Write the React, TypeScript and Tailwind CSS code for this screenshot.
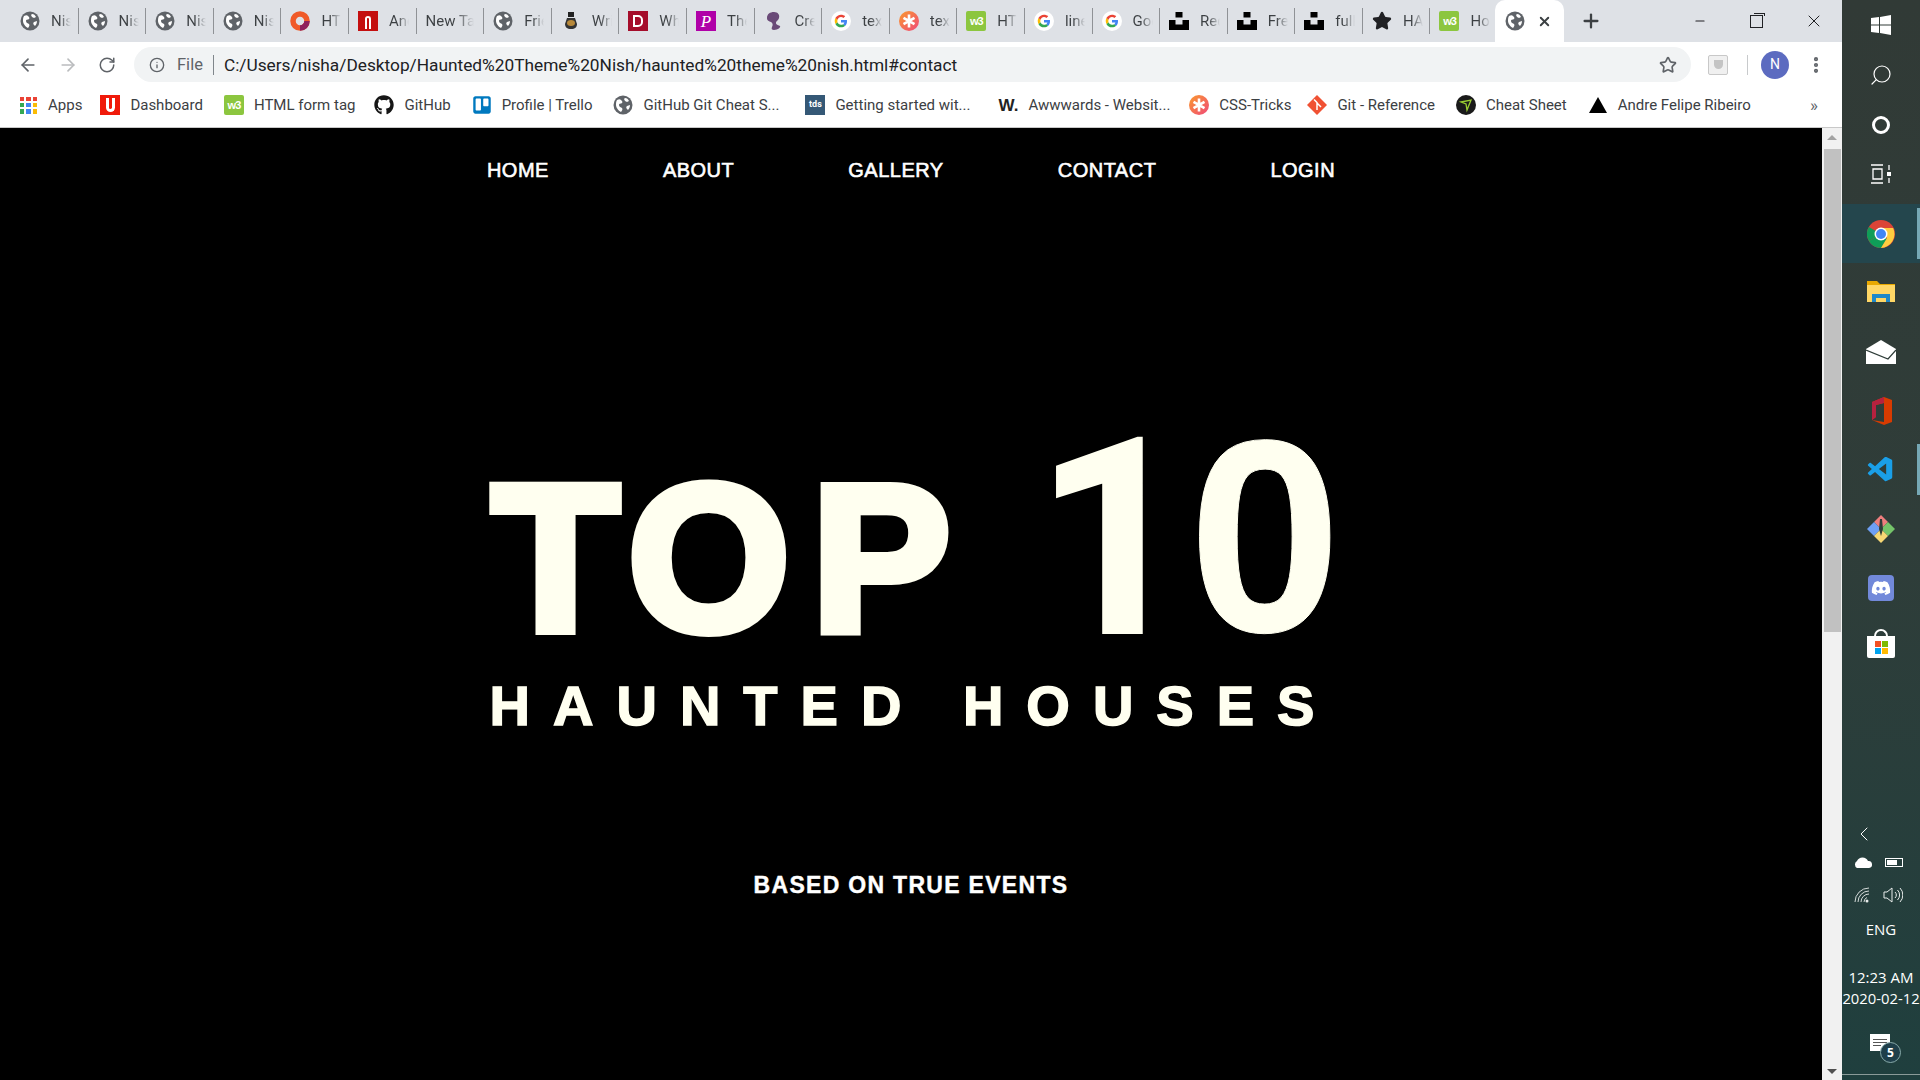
import { ArrowLeft, ArrowRight, ChevronLeft, Info, Minus, MoreVertical, Plus, RotateCw, Search, Star, X } from "lucide-react";
import { FaDiscord, FaGithub, FaTrello } from "react-icons/fa";
import { VscVscode } from "react-icons/vsc";

type Fav = "globe" | "opera" | "red" | "none" | "ink" | "dictionary" | "p" | "blob" | "google" | "css" | "w3" | "unsplash" | "star";

const tabs: { icon: Fav; label: string }[] = [
  { icon: "globe", label: "Nisha" },
  { icon: "globe", label: "Nisha" },
  { icon: "globe", label: "Nisha" },
  { icon: "globe", label: "Nisha" },
  { icon: "opera", label: "HTML" },
  { icon: "red", label: "Ancient" },
  { icon: "none", label: "New Tab" },
  { icon: "globe", label: "Friends" },
  { icon: "ink", label: "Writer" },
  { icon: "dictionary", label: "What" },
  { icon: "p", label: "The" },
  { icon: "blob", label: "Create" },
  { icon: "google", label: "text" },
  { icon: "css", label: "text" },
  { icon: "w3", label: "HTML" },
  { icon: "google", label: "linear" },
  { icon: "google", label: "Google" },
  { icon: "unsplash", label: "Red" },
  { icon: "unsplash", label: "Free" },
  { icon: "unsplash", label: "full" },
  { icon: "star", label: "HAUNTED" },
  { icon: "w3", label: "How" },
];

const nav = ["HOME", "ABOUT", "GALLERY", "CONTACT", "LOGIN"];

function Globe() {
  return (
    <svg viewBox="0 0 20 20" className="h-5 w-5 shrink-0">
      <circle cx="10" cy="10" r="9.500" fill="#5f6368" />
      <path d="M4 5c2-1 3-1 4 0s2 2 1 3-3 0-3 2 2 2 3 3 0 3-1 4C6 16 3 13 3 10c0-2 0-3 1-5z" fill="#fff" />
      <path d="M12 3c2 0 3 1 4 3l-2 1-2-1-1-2zM14 11l3-1c0 2-1 4-2 5l-1-1c-1-1-1-2 0-3z" fill="#fff" />
    </svg>
  );
}

function GoogleG() {
  return (
    <svg viewBox="0 0 20 20" className="h-5 w-5 shrink-0">
      <circle cx="10" cy="10" r="10" fill="#fff" />
      <path d="M16 10.200c0-.5 0-.9-.1-1.300H10v2.500h3.400c-.2.800-.6 1.400-1.300 1.900l2 1.600c1.200-1.100 1.900-2.700 1.900-4.700z" fill="#4285f4" />
      <path d="M10 16.300c1.700 0 3-.5 4.100-1.500l-2-1.600c-.6.400-1.300.6-2.100.6-1.600 0-3-1.100-3.500-2.500l-2.100 1.600c1.100 2.200 3.200 3.400 5.600 3.400z" fill="#34a853" />
      <path d="M6.500 11.300c-.3-.8-.3-1.700 0-2.500L4.400 7.100c-.9 1.800-.9 3.900 0 5.800z" fill="#fbbc05" />
      <path d="M10 6.100c.9 0 1.700.3 2.400.9l1.800-1.800C13.100 4.200 11.600 3.700 10 3.700 7.600 3.700 5.500 5 4.400 7.100l2.100 1.700C7 7.300 8.400 6.100 10 6.100z" fill="#ea4335" />
    </svg>
  );
}

function CssTricks() {
  return (
    <svg viewBox="0 0 20 20" className="h-5 w-5 shrink-0">
      <defs>
        <linearGradient id="cssg" x1="0" y1="0" x2="1" y2="1">
          <stop offset="0" stopColor="#fa9a2d" />
          <stop offset="1" stopColor="#f0487a" />
        </linearGradient>
      </defs>
      <circle cx="10" cy="10" r="10" fill="url(#cssg)" />
      <path d="M10 3.500v13M4.500 6.800l11 6.400M15.500 6.800l-11 6.400" stroke="#fff" strokeWidth="2.600" />
    </svg>
  );
}

function W3() {
  return (
    <div className="flex h-5 w-5 shrink-0 items-center justify-center rounded-[2px] bg-[#8cc63f] font-['Liberation_Sans',sans-serif] text-[11px] font-bold tracking-[-1px] text-white">
      w3
    </div>
  );
}

function Unsplash() {
  return (
    <svg viewBox="0 0 20 20" className="h-5 w-5 shrink-0">
      <path d="M6.500 1h7v5.500h-7zM0 9h6.500v4.500h7V9H20v10H0z" fill="#000" />
    </svg>
  );
}

function Favicon({ icon }: { icon: Fav }) {
  if (icon === "globe") return <Globe />;
  if (icon === "google") return <GoogleG />;
  if (icon === "css") return <CssTricks />;
  if (icon === "w3") return <W3 />;
  if (icon === "unsplash") return <Unsplash />;
  if (icon === "none") return null;
  if (icon === "opera")
    return (
      <svg viewBox="0 0 20 20" className="h-5 w-5 shrink-0">
        <circle cx="10" cy="10" r="7" fill="none" stroke="#f05a28" strokeWidth="5.500" />
        <path d="M10 17a7 7 0 0 0 7-7" fill="none" stroke="#8e1f5c" strokeWidth="5.500" />
      </svg>
    );
  if (icon === "red")
    return (
      <div className="flex h-5 w-5 shrink-0 items-end justify-center bg-[#c40f0f] pb-[2px]">
        <div className="h-[13px] w-[6px] rounded-t-[3px] border-2 border-b-0 border-white" />
      </div>
    );
  if (icon === "ink")
    return (
      <svg viewBox="0 0 20 20" className="h-5 w-5 shrink-0">
        <path d="M7 1h6v5H7z" fill="#222" />
        <path d="M6 7h8l2 6c0 3-2 5-6 5s-6-2-6-5z" fill="#333" />
        <ellipse cx="10" cy="12" rx="4" ry="3" fill="#b8893a" />
      </svg>
    );
  if (icon === "dictionary")
    return (
      <div className="flex h-5 w-5 shrink-0 items-center justify-center bg-[#a50d2b]">
        <div className="h-[12px] w-[10px] rounded-r-[5px] border-2 border-white" />
      </div>
    );
  if (icon === "p")
    return (
      <div className="flex h-5 w-5 shrink-0 items-center justify-center bg-[#b000a8] font-['Liberation_Serif',serif] text-[17px] italic leading-none text-white">
        P
      </div>
    );
  if (icon === "blob")
    return (
      <svg viewBox="0 0 20 20" className="h-5 w-5 shrink-0">
        <path d="M3 7c0-4 3-6 7-6s6 3 5 6-3 3-3 5 3 2 4 3-2 4-6 4c-2 0-3-1-2-3s1-4-1-5-4-1-4-4z" fill="#6a4a78" />
      </svg>
    );
  return <Star className="h-5 w-5 shrink-0 fill-[#202124] text-[#202124]" />;
}

function Tab({ icon, label }: { icon: Fav; label: string }) {
  return (
    <div className="flex h-[26px] w-[67.600px] shrink-0 items-center gap-[11px] border-r border-[#8f9296] pl-[9px]">
      <Favicon icon={icon} />
      <span
        className={
          icon === "none"
            ? "w-[48px] overflow-hidden whitespace-nowrap bg-linear-to-r from-[#3c4043] from-60% to-[#dee1e6] bg-clip-text text-[15px] text-transparent"
            : "w-[20px] overflow-hidden whitespace-nowrap bg-linear-to-r from-[#3c4043] from-40% to-[#dee1e6] bg-clip-text text-[15px] text-transparent"
        }
      >
        {label}
      </span>
    </div>
  );
}

function Bookmark({ icon, label, className }: { icon: React.ReactNode; label: string; className?: string }) {
  return (
    <div className={"flex items-center gap-[10px] " + (className ?? "")}>
      {icon}
      <span className="whitespace-nowrap text-[15px] text-[#3c4043]">{label}</span>
    </div>
  );
}

function AppsGrid() {
  const colors = ["#ea4335", "#ea4335", "#ea4335", "#34a853", "#4285f4", "#fbbc05", "#34a853", "#4285f4", "#fbbc05"];
  return (
    <div className="mr-px grid h-[17px] w-[17px] shrink-0 grid-cols-3 gap-[2px]">
      {colors.map((c, i) => (
        <div key={i} className="bg-current" style={{ color: c }} />
      ))}
    </div>
  );
}

function Chrome() {
  return (
    <svg viewBox="0 0 28 28" className="h-7 w-7">
      <circle cx="14" cy="14" r="14" fill="#db4437" />
      <path d="M14 14 1.900 21A14 14 0 0 1 1.900 7z" fill="#0f9d58" />
      <path d="M14 14 1.900 21A14 14 0 0 0 14 28l6-9z" fill="#0f9d58" />
      <path d="M14 8h12.100A14 14 0 0 1 14 28l6-10z" fill="#ffcd40" />
      <circle cx="14" cy="14" r="6.500" fill="#fff" />
      <circle cx="14" cy="14" r="5" fill="#4285f4" />
    </svg>
  );
}

function DockItem({ children, active, running }: { children: React.ReactNode; active?: boolean; running?: boolean }) {
  return (
    <div className={active ? "relative flex h-[59px] items-center justify-center bg-[#24464d]" : "relative flex h-[59px] items-center justify-center"}>
      {children}
      {active || running ? <div className="absolute right-0 top-[4px] bottom-[4px] w-[3px] bg-[#76a8b5]" /> : null}
    </div>
  );
}

export default function App() {
  return (
    <div className="flex h-[1080px] w-[1920px] overflow-hidden bg-black font-['Roboto',sans-serif]">
      <div className="flex w-[1842px] flex-col">
        {/* Tab strip */}
        <div className="flex h-[42px] items-center bg-[#dee1e6] pl-[11px]">
          {tabs.map((t, i) => (
            <Tab key={i} icon={t.icon} label={t.label} />
          ))}
          <div className="ml-[-3px] flex h-[42px] w-[69px] shrink-0 items-center gap-[12px] self-end rounded-t-[10px] bg-white pl-[10px]">
            <Globe />
            <X className="h-[15px] w-[15px] text-[#3c4043]" strokeWidth={3} />
          </div>
          <Plus className="ml-[16px] h-[22px] w-[22px] text-[#3c4043]" strokeWidth={2.500} />
          <div className="ml-auto flex items-center text-[#202124]">
            <div className="flex w-[57px] justify-center"><Minus className="h-4 w-[14px]" strokeWidth={1.800} /></div>
            <div className="flex w-[57px] justify-center">
              <div className="relative h-[13px] w-[13px] border border-[#202124] bg-[#dee1e6]">
                <div className="absolute -right-[3px] -top-[3px] h-[3px] w-[11px] border-r border-t border-[#202124]" />
              </div>
            </div>
            <div className="flex w-[57px] justify-center"><X className="h-5 w-5" strokeWidth={1.200} /></div>
          </div>
        </div>

        {/* Toolbar */}
        <div className="flex h-[45px] items-center bg-white pl-[18px]">
          <ArrowLeft className="h-5 w-5 text-[#5f6368]" />
          <ArrowRight className="ml-[20px] h-5 w-5 text-[#babcbe]" />
          <RotateCw className="ml-[20px] h-[18px] w-[18px] text-[#5f6368]" />
          <div className="ml-[18px] flex h-[35px] w-[1557px] items-center rounded-full bg-[#f1f3f4] pl-[15px] pr-[14px]">
            <Info className="h-4 w-4 text-[#5f6368]" />
            <span className="ml-[12px] pt-[2px] text-[16.500px] text-[#5f6368]">File</span>
            <div className="ml-[10px] h-5 w-px bg-[#80868b]" />
            <span className="ml-[10px] pt-[2px] text-[17.300px] text-[#202124]">C:/Users/nisha/Desktop/Haunted%20Theme%20Nish/haunted%20theme%20nish.html#contact</span>
            <Star className="ml-auto h-[18px] w-[18px] text-[#5f6368]" strokeWidth={2.200} />
          </div>
          <div className="ml-[17px] flex h-5 w-5 items-center justify-center rounded-[2px] border border-[#c8c8c8] bg-[#f0f0f0]">
            <div className="h-[9px] w-[9px] rounded-b-full bg-[#c4c4c4]" />
          </div>
          <div className="ml-[19px] h-5 w-px bg-[#c8cacc]" />
          <div className="ml-[13px] flex h-7 w-7 items-center justify-center rounded-full bg-[#5c6bc0] text-[14px] text-white">N</div>
          <MoreVertical className="ml-[17px] h-5 w-5 text-[#5f6368]" strokeWidth={3} />
        </div>

        {/* Bookmarks */}
        <div className="flex h-[41px] items-center gap-[21px] border-b border-[#c8c8c8] bg-white pb-[4px] pl-[20px]">
          <Bookmark icon={<AppsGrid />} label="Apps" />
          <Bookmark className="ml-[-3px]" icon={<div className="flex h-5 w-5 shrink-0 items-center justify-center bg-[#f01a0a]"><div className="h-[14px] w-[9px] rounded-b-[5px] border-x-[3px] border-b-[3px] border-white" /></div>} label="Dashboard" />
          <Bookmark icon={<W3 />} label="HTML form tag" />
          <Bookmark className="ml-[-2px]" icon={<FaGithub className="h-5 w-5 shrink-0 text-[#161616]" />} label="GitHub" />
          <Bookmark icon={<FaTrello className="h-5 w-5 shrink-0 text-[#0079bf]" />} label="Profile | Trello" />
          <Bookmark icon={<Globe />} label="GitHub Git Cheat S..." />
          <Bookmark className="ml-[5px]" icon={<div className="flex h-5 w-5 shrink-0 items-center justify-center bg-[#355876] text-[9px] font-bold text-white">tds</div>} label="Getting started wit..." />
          <Bookmark className="ml-[7px]" icon={<div className="flex h-5 w-5 shrink-0 items-center justify-center font-['Liberation_Sans',sans-serif] text-[17px] font-bold leading-none text-[#222]">W.</div>} label="Awwwards - Websit..." />
          <Bookmark className="ml-[-2px]" icon={<CssTricks />} label="CSS-Tricks" />
          <Bookmark className="ml-[-5px]" icon={<svg viewBox="0 0 20 20" className="h-5 w-5 shrink-0"><path d="M10 0 20 10 10 20 0 10z" fill="#f05133" /><path d="M7 4.500 10 7.500V15M10 8l4 4" stroke="#fff" strokeWidth="1.500" fill="none" /></svg>} label="Git - Reference" />
          <Bookmark icon={<svg viewBox="0 0 20 20" className="h-5 w-5 shrink-0"><circle cx="10" cy="10" r="10" fill="#1a1a1a" /><path d="M5 7l10-2-4 10-1-6z" fill="none" stroke="#9acd32" strokeWidth="1.300" /></svg>} label="Cheat Sheet" />
          <Bookmark icon={<svg viewBox="0 0 20 20" className="h-5 w-5 shrink-0"><path d="M10 2 19 18H1z" fill="#000" /></svg>} label="Andre Felipe Ribeiro" />
          <span className="ml-auto mr-[24px] text-[17px] leading-none text-[#5f6368]">»</span>
        </div>

        {/* Page */}
        <div className="flex flex-1 bg-black">
          <main className="flex flex-1 flex-col items-center font-['Liberation_Sans',sans-serif] font-bold">
            <nav className="mt-[30px] flex gap-[114px] text-[20px] font-normal leading-[24px] tracking-[.5px] text-white [-webkit-text-stroke:.6px_#fff]">
              {nav.map((n) => (
                <a key={n}>{n}</a>
              ))}
            </nav>
            <h1 className="ml-[11px] mt-[208px] flex items-baseline whitespace-nowrap leading-[290px] text-[#fffff0]">
              <span className="text-[208px] tracking-[9px] [-webkit-text-stroke:10px_#fffff0]">T</span>
              <span className="text-[208px] tracking-[22px] [-webkit-text-stroke:10px_#fffff0]">O</span>
              <span className="text-[208px] [-webkit-text-stroke:10px_#fffff0]">P</span>
              <span className="ml-[84px] translate-y-[3px] font-['Roboto',sans-serif] text-[274px] [-webkit-text-stroke:2px_#fffff0]">1</span>
              <span className="ml-[-3px] translate-y-px text-[274px] [-webkit-text-stroke:1px_#fffff0]">0</span>
            </h1>
            <p className="ml-[5px] mt-[-30px] whitespace-nowrap text-[56px] leading-[66px] tracking-[23px] text-[#fffff0] [-webkit-text-stroke:1.500px_#fffff0]">HAUNTED HOUSES</p>
            <p className="mt-[132px] text-[23px] leading-[28px] tracking-[1.300px] text-white [-webkit-text-stroke:.4px_#fff]">BASED ON TRUE EVENTS</p>
          </main>

          {/* Scrollbar */}
          <div className="flex w-5 flex-col items-center bg-[#f1f1f1]">
            <div className="mt-[7px] h-0 w-0 border-x-[5px] border-b-[5px] border-x-transparent border-b-[#a3a3a3]" />
            <div className="mt-[9px] h-[483px] w-[17px] bg-[#c1c1c1]" />
            <div className="mb-[6px] mt-auto h-0 w-0 border-x-[5px] border-t-[5px] border-x-transparent border-t-[#505050]" />
          </div>
        </div>
      </div>

      {/* Windows taskbar */}
      <aside className="flex w-[78px] flex-col bg-linear-to-b from-[#313a36] via-[#2f3d39] to-[#1f3f3e] font-['Open_Sans',sans-serif] text-white">
        <div className="flex h-[50px] items-center justify-center">
          <svg viewBox="0 0 20 20" className="h-5 w-5"><path d="M0 3l8-1v7.500H0zM9 1.900 20 0v9.500H9zM0 10.500h8V18l-8-1zM9 10.500h11V20L9 18.100z" fill="#fff" /></svg>
        </div>
        <div className="flex h-[50px] items-center justify-center"><Search className="h-6 w-6 -scale-x-100" strokeWidth={1.200} /></div>
        <div className="flex h-[50px] items-center justify-center"><div className="h-[18px] w-[18px] rounded-full border-[3px] border-white" /></div>
        <div className="mb-[6px] flex h-[48px] items-center justify-center">
          <svg viewBox="0 0 22 20" className="h-5 w-[22px]" fill="none" stroke="#fff" strokeWidth="1.300"><path d="M1 1h12M1 19h12M3 5h9v10H3zM19 1v5M19 14v5" /><rect x="17" y="8" width="4" height="4" fill="#fff" stroke="none" /></svg>
        </div>
        <DockItem active><Chrome /></DockItem>
        <DockItem>
          <svg viewBox="0 0 28 24" className="mb-[3px] h-6 w-7"><path d="M0 2h10l3 3h15v17H0z" fill="#e8a800" /><path d="M0 6h28v17H0z" fill="#ffd766" /><path d="M5 23v-8h18v8h-4v-4H9v4z" fill="#1e88c9" /></svg>
        </DockItem>
        <DockItem>
          <svg viewBox="0 0 30 24" className="h-6 w-[30px]"><path d="M15 0 30 9 30 24H0V9z" fill="#fff" /><path d="M0 10 22 19 30 10" fill="none" stroke="#2f3d39" strokeWidth="1.200" /></svg>
        </DockItem>
        <DockItem>
          <svg viewBox="0 0 24 28" className="h-7 w-6"><path d="M3 5 15 0l8 3v22l-8 3-12-5 12 2V6L7 8v12l-4 3z" fill="#d83b01" /><path d="M3 5 15 0v6L7 8v12l-4 3z" fill="#b7213f" /></svg>
        </DockItem>
        <DockItem running><VscVscode className="h-[30px] w-[30px] text-[#1a9fe8]" /></DockItem>
        <DockItem>
          <svg viewBox="0 0 30 30" className="h-[30px] w-[30px]">
            <path d="M15 1 22 8 15 15 8 8z" fill="#ee7e7e" /><path d="M1 15 8 8l7 7-7 7z" fill="#6e9ff5" /><path d="M29 15l-7-7-7 7 7 7z" fill="#75c46a" /><path d="M15 29l7-7-7-7-7 7z" fill="#f7d774" />
            <path d="M14 5h2l1 10-2 7-2-7z" fill="#2f3d39" />
          </svg>
        </DockItem>
        <DockItem><FaDiscord className="h-[26px] w-[26px] rounded-[4px] bg-[#7289da] p-[3px] text-white" /></DockItem>
        <DockItem>
          <div className="relative h-[22px] w-[28px] rounded-b-[2px] bg-white">
            <div className="absolute -top-[7px] left-[7px] h-[8px] w-[14px] rounded-t-full border-2 border-b-0 border-white" />
            <div className="absolute left-[8px] top-[5px] grid grid-cols-2 gap-px">
              <div className="h-[6px] w-[6px] bg-[#f25022]" /><div className="h-[6px] w-[6px] bg-[#7fba00]" />
              <div className="h-[6px] w-[6px] bg-[#00a4ef]" /><div className="h-[6px] w-[6px] bg-[#ffb900]" />
            </div>
          </div>
        </DockItem>

        {/* Tray */}
        <div className="mt-auto flex flex-col items-center">
          <ChevronLeft className="mr-[35px] h-6 w-6" strokeWidth={1} />
          <div className="mr-[7px] mt-[10px] flex items-center gap-[12px]">
            <svg viewBox="0 0 20 12" className="h-3 w-5"><path d="M4 12a4 4 0 0 1 0-7 6 6 0 0 1 11 0 3.500 3.500 0 0 1 1 7z" fill="#fff" /></svg>
            <div className="relative h-[9px] w-[18px] border border-white p-px"><div className="h-full w-[10px] bg-white" /></div>
          </div>
          <div className="mr-[5px] mt-[17px] flex items-center gap-[13px]">
            <svg viewBox="0 0 16 16" className="h-4 w-4" fill="none" stroke="#e8eceb" strokeWidth=".9"><path d="M1 15A14 14 0 0 1 15 1M4 15A11 11 0 0 1 15 4M7 15A8 8 0 0 1 15 7M10 15a5 5 0 0 1 3-4.500" /><circle cx="13" cy="14" r="1.500" fill="#e8eceb" stroke="none" /></svg>
            <svg viewBox="0 0 20 20" className="h-5 w-5" fill="none" stroke="#e8eceb" strokeWidth="1"><path d="M1 7h3l5-4v14l-5-4H1zM12 7a4 4 0 0 1 0 6M14.500 5a7 7 0 0 1 0 10M17 3a10 10 0 0 1 0 14" /></svg>
          </div>
          <div className="mt-[14px] text-[15px] leading-[20px]">ENG</div>
          <div className="mt-[28px] text-[15px] leading-[21px]">12:23 AM</div>
          <div className="whitespace-nowrap text-[14.800px] leading-[21px]">2020-02-12</div>
          <div className="relative mr-[2px] mt-[25px] flex h-[17px] w-5 flex-col justify-center gap-[2px] bg-white px-[3px]">
            <div className="h-px bg-[#555]" />
            <div className="h-px bg-[#555]" />
            <div className="h-px w-[8px] bg-[#555]" />
            <div className="absolute -bottom-[12px] -right-[11px] flex h-[21px] w-[21px] items-center justify-center rounded-full border border-[#8aa] bg-[#1f3f4a] text-[12px] font-bold">5</div>
          </div>
          <div className="mt-[23px] h-px w-full bg-[#8a9a98]" />
          <div className="h-[5px]" />
        </div>
      </aside>
    </div>
  );
}
